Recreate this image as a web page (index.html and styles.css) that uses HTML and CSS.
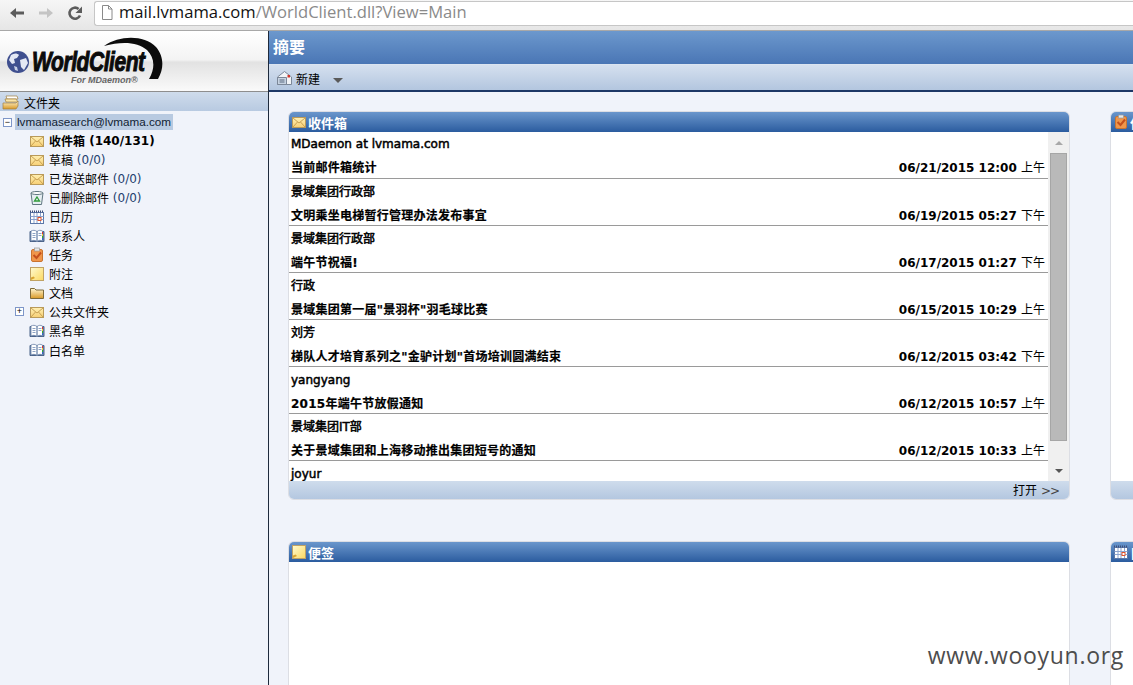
FILE: index.html
```html
<!DOCTYPE html>
<html lang="zh">
<head>
<meta charset="utf-8">
<title>WorldClient</title>
<link rel="stylesheet" href="styles.css">
</head>
<body>
<svg class="defs" width="0" height="0">
  <defs>
    <linearGradient id="gEnv" x1="0" y1="0" x2="0" y2="1"><stop offset="0" stop-color="#fff0b4"/><stop offset="1" stop-color="#f7cf74"/></linearGradient>
    <linearGradient id="gNote" x1="0" y1="0" x2="1" y2="1"><stop offset="0" stop-color="#fffbd0"/><stop offset="1" stop-color="#fbd860"/></linearGradient>
    <linearGradient id="gFold" x1="0" y1="0" x2="0" y2="1"><stop offset="0" stop-color="#fff6d0"/><stop offset="1" stop-color="#d99a28"/></linearGradient>
    <symbol id="env" viewBox="0 0 16 16">
      <rect x="1.500" y="3.500" width="13" height="10" fill="url(#gEnv)" stroke="#b99a5a"/>
      <path d="M2 4l6 5 6-5M2 13l4.500-5M14 13l-4.500-5" fill="none" stroke="#c9a254"/>
    </symbol>
    <symbol id="book" viewBox="0 0 16 16">
      <path d="M1 3.500h14v10H1z" fill="#6d86ad" stroke="#4a6288"/>
      <path d="M2 3c2-1 4-1 6 .5v10c-2-1.500-4-1.500-6-.5zM8 3.500c2-1.500 3.500-1.500 5.500-.5v10c-2-1-3.500-1-5.500.5z" fill="#fff" stroke="#6b83a8" stroke-width=".8"/>
      <path d="M3.500 5.500h3M3.500 7.500h3M3.500 9.500h3M9.500 5.500h3M9.500 7.500h3" stroke="#8ea3c4"/>
      <path d="M13.500 4v2" stroke="#d33"/><path d="M13.500 6v2" stroke="#ec3"/><path d="M13.500 8v2" stroke="#3a3"/><path d="M13.500 10v2" stroke="#36c"/>
    </symbol>
    <symbol id="task" viewBox="0 0 16 16">
      <rect x="2.500" y="2.500" width="11" height="12" rx="1.500" fill="#f0964a" stroke="#c97430"/>
      <rect x="5.500" y="1" width="5" height="3" fill="#e8e8e8" stroke="#999" stroke-width=".7"/>
      <path d="M4.500 8l3 3 4.500-5.500" fill="none" stroke="#c44f1c" stroke-width="2"/>
    </symbol>
    <symbol id="note" viewBox="0 0 16 16">
      <rect x="1.500" y="1.500" width="13" height="13" fill="url(#gNote)" stroke="#c0a264"/>
      <path d="M2 14l4-2-1.500-1.500-2.500 1z" fill="#d9a430"/>
    </symbol>
    <symbol id="cal" viewBox="0 0 16 16">
      <rect x="1.500" y="3.500" width="13" height="11" fill="#fff" stroke="#5c77a8"/>
      <path d="M1 2.500h14" stroke="#3f4f78" stroke-dasharray="1 1" stroke-width="2"/>
      <path d="M1.500 7.500h13M1.500 10.500h13M5 4v10M8 4v10M11.500 4v10" stroke="#8ba3cf"/>
      <rect x="9" y="8.500" width="3" height="3" fill="#fff" stroke="#e0532a"/>
    </symbol>
  </defs>
</svg>

<div class="chrome">
  <svg class="nav-icon" width="16" height="16" viewBox="0 0 16 16"><path d="M15 6.500H7V3L1 8l6 5V9.500h8z" fill="#5c5c5c"/></svg>
  <svg class="nav-icon" width="16" height="16" viewBox="0 0 16 16"><path d="M1 6.500h8V3l6 5-6 5V9.500H1z" fill="#c4c4c4"/></svg>
  <svg class="nav-icon" width="16" height="16" viewBox="0 0 16 16"><path d="M13 10.500A5.500 5.500 0 1 1 11.600 4" fill="none" stroke="#5c5c5c" stroke-width="2.600"/><path d="M15 1.500V8H8.500z" fill="#5c5c5c"/></svg>
  <div class="urlbar">
    <svg width="12" height="15" viewBox="0 0 12 15"><path d="M1.500.5h6l3.500 3.500v10.500h-9.500z" fill="#fff" stroke="#8a8a8a"/><path d="M7.500.5V4H11" fill="none" stroke="#8a8a8a"/></svg>
    <span class="host">mail.lvmama.com</span><span class="path">/WorldClient.dll?View=Main</span>
  </div>
</div>

<div class="frame">
  <aside class="sidebar">
    <div class="logo">
      <svg class="globe" width="24" height="24" viewBox="0 0 24 24">
        <circle cx="12" cy="12" r="11" fill="#3f4f8f"/>
        <path d="M5 5c3-2 6-2 8 0l-2 3-3 1 1 4-3 1-3-4zM14 10l6-2 2 5-4 7-3-3z" fill="#e4e8f4"/>
        <path d="M8 16l3 1 1 4-3-1z" fill="#c8d0e6"/>
      </svg>
      <div class="brand">
        <span class="brand-name">WorldClient</span>
        <span class="brand-sub">For MDaemon®</span>
      </div>
      <svg class="swoosh" width="64" height="44" viewBox="0 0 64 44"><path d="M2 9C18-2 42-2 54 10c7 8 9 20 2 32h-9c7-12 5-22-2-29C36 5 20 4 2 9z" fill="#0b0b0b"/></svg>
    </div>
    <div class="folders-head">
      <svg width="17" height="15" viewBox="0 0 17 15"><path d="M4 1h11l1 3H5z" fill="#fff" stroke="#a08040" stroke-width=".7"/><path d="M3 4h11l2 3H4z" fill="#fbe6a8" stroke="#a08040" stroke-width=".7"/><path d="M1 8h13l2-2v5l-2 3H1z" fill="url(#gFold)" stroke="#a08040" stroke-width=".7"/></svg>
      <span>文件夹</span>
    </div>
    <div class="tree">
      <div class="account"><span class="toggle">−</span><span class="account-name">lvmamasearch@lvmama.com</span></div>
      <div class="item bold"><svg><use href="#env"/></svg>收件箱 <em>(140/131)</em></div>
      <div class="item"><svg><use href="#env"/></svg>草稿 <em class="count">(0/0)</em></div>
      <div class="item"><svg><use href="#env"/></svg>已发送邮件 <em class="count">(0/0)</em></div>
      <div class="item"><svg viewBox="0 0 16 16"><path d="M2 3h12l-1.500 11.500h-9z" fill="#e6eef2" stroke="#5f7680"/><ellipse cx="8" cy="3" rx="6" ry="1.500" fill="#fff" stroke="#5f7680"/><path d="M8 7l2.500 4h-5z" fill="none" stroke="#2f9a3a" stroke-width="1.300"/></svg>已删除邮件 <em class="count">(0/0)</em></div>
      <div class="item"><svg><use href="#cal"/></svg>日历</div>
      <div class="item"><svg><use href="#book"/></svg>联系人</div>
      <div class="item"><svg><use href="#task"/></svg>任务</div>
      <div class="item"><svg><use href="#note"/></svg>附注</div>
      <div class="item"><svg viewBox="0 0 16 16"><path d="M1.500 13.500v-10h4l1.500 1.500h7.500v8.500z" fill="url(#gFold)" stroke="#7d6a3a"/></svg>文档</div>
      <div class="item"><span class="toggle plus">+</span><svg><use href="#env"/></svg>公共文件夹</div>
      <div class="item"><svg><use href="#book"/></svg>黑名单</div>
      <div class="item"><svg><use href="#book"/></svg>白名单</div>
    </div>
  </aside>

  <main class="content">
    <div class="title-bar">摘要</div>
    <div class="toolbar">
      <svg width="17" height="16" viewBox="0 0 17 16"><path d="M1.500 7l7-5.500 7 5.500v7.500h-14z" fill="#f2f4f7" stroke="#7b8798"/><path d="M1.500 7.500h9v7h-9z" fill="#c7d3e2" stroke="#7b8798"/><rect x="11.500" y="5" width="2.500" height="2.500" fill="#d2362b"/><path d="M3.500 10h5M3.500 12h5" stroke="#5a6a80"/></svg>
      <span class="new-label">新建</span>
      <span class="caret"></span>
    </div>
    <div class="panels">
      <section class="panel">
        <h3 class="panel-head"><svg><use href="#env"/></svg>收件箱</h3>
        <div class="panel-body mail-body">
          <ul class="mail-list">
            <li><p class="sender">MDaemon at lvmama.com</p><p class="subject"><span>当前邮件箱统计</span><time>06/21/2015 12:00 <i>上午</i></time></p></li>
            <li><p class="sender">景域集团行政部</p><p class="subject"><span>文明乘坐电梯暂行管理办法发布事宜</span><time>06/19/2015 05:27 <i>下午</i></time></p></li>
            <li><p class="sender">景域集团行政部</p><p class="subject"><span>端午节祝福!</span><time>06/17/2015 01:27 <i>下午</i></time></p></li>
            <li><p class="sender">行政</p><p class="subject"><span>景域集团第一届"景羽杯"羽毛球比赛</span><time>06/15/2015 10:29 <i>上午</i></time></p></li>
            <li><p class="sender">刘芳</p><p class="subject"><span>梯队人才培育系列之"金驴计划"首场培训圆满结束</span><time>06/12/2015 03:42 <i>下午</i></time></p></li>
            <li><p class="sender">yangyang</p><p class="subject"><span>2015年端午节放假通知</span><time>06/12/2015 10:57 <i>上午</i></time></p></li>
            <li><p class="sender">景域集团IT部</p><p class="subject"><span>关于景域集团和上海移动推出集团短号的通知</span><time>06/12/2015 10:33 <i>上午</i></time></p></li>
            <li><p class="sender">joyur</p></li>
          </ul>
          <div class="scrollbar">
            <span class="arrow up"></span>
            <span class="thumb"></span>
            <span class="arrow down"></span>
          </div>
        </div>
        <div class="panel-foot">打开 <b>&gt;&gt;</b></div>
      </section>
      <section class="panel">
        <h3 class="panel-head"><svg><use href="#task"/></svg>任务</h3>
        <div class="panel-body"></div>
        <div class="panel-foot"></div>
      </section>
      <section class="panel open-end">
        <h3 class="panel-head"><svg><use href="#note"/></svg>便签</h3>
        <div class="panel-body"></div>
      </section>
      <section class="panel open-end">
        <h3 class="panel-head"><svg><use href="#cal"/></svg>日历</h3>
        <div class="panel-body"></div>
      </section>
    </div>
  </main>
</div>

<div class="watermark">www.wooyun.org</div>
</body>
</html>
```

FILE: styles.css
```css
* {
  margin: 0;
  padding: 0;
  box-sizing: border-box;
}

html, body {
  height: 100%;
  overflow: hidden;
}

body {
  font-family: "DejaVu Sans", "Noto Sans CJK SC", sans-serif;
  font-size: 12px;
  color: #000;
  background: #f0f3fa;
}

.defs {
  position: absolute;
}

/* browser toolbar */
.chrome {
  height: 31px;
  display: flex;
  align-items: flex-start;
  gap: 13px;
  padding: 5px 0 0 9px;
  background: linear-gradient(#f6f6f6, #e6e6e6);
  border-bottom: 1px solid #a8a8a8;
}

.nav-icon {
  flex: none;
}

.urlbar {
  flex: 1;
  height: 25px;
  margin: -4px 0 0 -2px;
  padding: 0 0 3px 6px;
  display: flex;
  align-items: center;
  background: #fff;
  border: 1px solid #c6c6c6;
  border-right: 0;
  border-radius: 3px 0 0 3px;
  font-family: "Open Sans", "Noto Sans", sans-serif;
  font-size: 16.6px;
  line-height: 22px;
}

.urlbar svg {
  margin-right: 6px;
}

.host {
  color: #111;
}

.path {
  color: #8a8a8a;
}

.frame {
  height: 654px;
  display: flex;
}

/* left column */
.sidebar {
  width: 269px;
  flex: none;
  border-right: 1px solid #1e2a3c;
  background: #f0f3fa;
}

.logo {
  height: 61px;
  display: flex;
  align-items: center;
  padding: 1px 0 0 6px;
  position: relative;
  background: linear-gradient(#fff 0, #f3f3f3 48%, #e2e2e2 52%, #fafafa 100%);
  border-bottom: 1px solid #8e8e8e;
}

.brand {
  margin: 10px 0 0 2px;
  display: flex;
  flex-direction: column;
  align-items: flex-start;
  line-height: 1;
}

.brand-name {
  font-family: "Liberation Sans", sans-serif;
  font-style: italic;
  font-weight: bold;
  font-size: 27px;
  letter-spacing: -.6px;
  color: #0b0b0b;
  -webkit-text-stroke: 1px #0b0b0b;
  transform: scaleX(.78);
  transform-origin: left center;
}

.brand-sub {
  margin-left: 39px;
  font-family: "Liberation Sans", sans-serif;
  font-style: italic;
  font-weight: bold;
  font-size: 9px;
  color: #666;
}

.swoosh {
  position: absolute;
  left: 102px;
  top: 6px;
}

.folders-head {
  height: 19px;
  display: flex;
  align-items: center;
  gap: 5px;
  padding: 1px 0 0 2px;
  background: linear-gradient(#cfdcec, #b8cae1);
}

.tree {
  padding-top: 2px;
}

.account {
  height: 18px;
  display: flex;
  align-items: center;
  padding-left: 3px;
}

.toggle {
  width: 9px;
  height: 9px;
  display: flex;
  align-items: center;
  justify-content: center;
  flex: none;
  border: 1px solid #7e96c8;
  background: #fff;
  font-family: "Liberation Sans", sans-serif;
  font-size: 9px;
  line-height: 1;
}

.account-name {
  margin-left: 3px;
  padding: 0 2px;
  height: 16px;
  line-height: 16px;
  background: #b8cae1;
  font-family: "Liberation Sans", sans-serif;
  font-size: 11.7px;
  color: #123;
}

.item {
  height: 19.05px;
  display: flex;
  align-items: center;
  padding-left: 29px;
  position: relative;
  white-space: pre;
}

.item svg {
  width: 16px;
  height: 16px;
  margin-right: 4px;
  flex: none;
}

.item em {
  font-style: normal;
}

.item .count {
  color: #24406e;
}

.item.bold {
  font-weight: bold;
}

.plus {
  position: absolute;
  left: 15px;
  top: 5px;
}

/* right column */
.content {
  flex: 1;
  min-width: 0;
  overflow: hidden;
}

.title-bar {
  height: 34px;
  padding: 0 4px;
  line-height: 33px;
  font-size: 16px;
  font-weight: bold;
  color: #fff;
  background: linear-gradient(#6c98cd, #4a76b5);
  border-bottom: 1px solid #dbe4f0;
}

.toolbar {
  height: 27px;
  display: flex;
  align-items: center;
  padding: 1px 0 0 7px;
  background: linear-gradient(#d5e0ef, #b3c6df);
  border-bottom: 2px solid #1d3766;
}

.new-label {
  margin-left: 3px;
}

.caret {
  margin-left: 13px;
  margin-top: 4px;
  border: 5px solid transparent;
  border-top: 5px solid #5a5a5a;
  border-bottom: 0;
}

.panels {
  display: grid;
  grid-template-columns: 782px 782px;
  grid-template-rows: 389px 200px;
  column-gap: 40px;
  row-gap: 41px;
  padding: 19px 0 0 19px;
}

.panel {
  display: flex;
  flex-direction: column;
  min-height: 0;
  border: 1px solid #dcdee4;
  border-radius: 6px;
}

.panel.open-end {
  border-bottom: 0;
  border-radius: 6px 6px 0 0;
}

.panel-head {
  height: 20px;
  flex: none;
  display: flex;
  align-items: center;
  padding-left: 2px;
  font-size: 13px;
  font-weight: bold;
  color: #fff;
  background: linear-gradient(#6a96cc, #2b5c9f);
  border-radius: 5px 5px 0 0;
}

.panel-head svg {
  width: 16px;
  height: 16px;
  margin-right: 1px;
}

.panel-body {
  flex: 1;
  min-height: 0;
  background: #fff;
}

.mail-body {
  display: flex;
  overflow: hidden;
}

.mail-list {
  flex: 1;
  list-style: none;
  font-weight: bold;
  overflow: hidden;
}

.mail-list li {
  height: 47px;
  padding: 2px 2px 0;
  border-bottom: 1px solid #9a9a9a;
}

.mail-list li:first-child {
  padding-top: 1px;
}

.mail-list li:last-child {
  border-bottom: 0;
}

.mail-list p {
  height: 23px;
  line-height: 23px;
  white-space: nowrap;
}

.mail-list .sender {
  height: 24px;
  font-weight: normal;
  -webkit-text-stroke: .5px #000;
}

.subject {
  display: flex;
  justify-content: space-between;
  padding-right: 1px;
}

.subject span {
  letter-spacing: .25px;
  -webkit-text-stroke: .2px #000;
}

.mail-list i {
  font-style: normal;
  font-weight: normal;
}

.scrollbar {
  width: 21px;
  flex: none;
  display: flex;
  flex-direction: column;
  align-items: center;
  background: #f0f0f0;
}

.thumb {
  width: 17px;
  height: 288px;
  flex: none;
  margin-top: 8px;
  background: #b9b9b9;
  border: 1px solid #a6a6a6;
}

.arrow {
  flex: none;
  border: 4px solid transparent;
}

.arrow.up {
  margin-top: 9px;
  border-bottom: 4px solid #a8a8a8;
  border-top: 0;
}

.arrow.down {
  margin-top: 28px;
  border-top: 4px solid #555;
  border-bottom: 0;
}

.panel-foot {
  height: 18px;
  flex: none;
  padding-right: 10px;
  text-align: right;
  line-height: 20px;
  background: linear-gradient(#cfdcec, #b4c7e0);
  border-radius: 0 0 5px 5px;
}

.panel-foot b {
  font-weight: normal;
  color: #444;
  letter-spacing: -1px;
}

.watermark {
  position: absolute;
  right: 9px;
  bottom: 16px;
  font-family: "Open Sans", sans-serif;
  font-size: 23px;
  letter-spacing: .7px;
  line-height: 28px;
  color: #4d4d4d;
}
```
